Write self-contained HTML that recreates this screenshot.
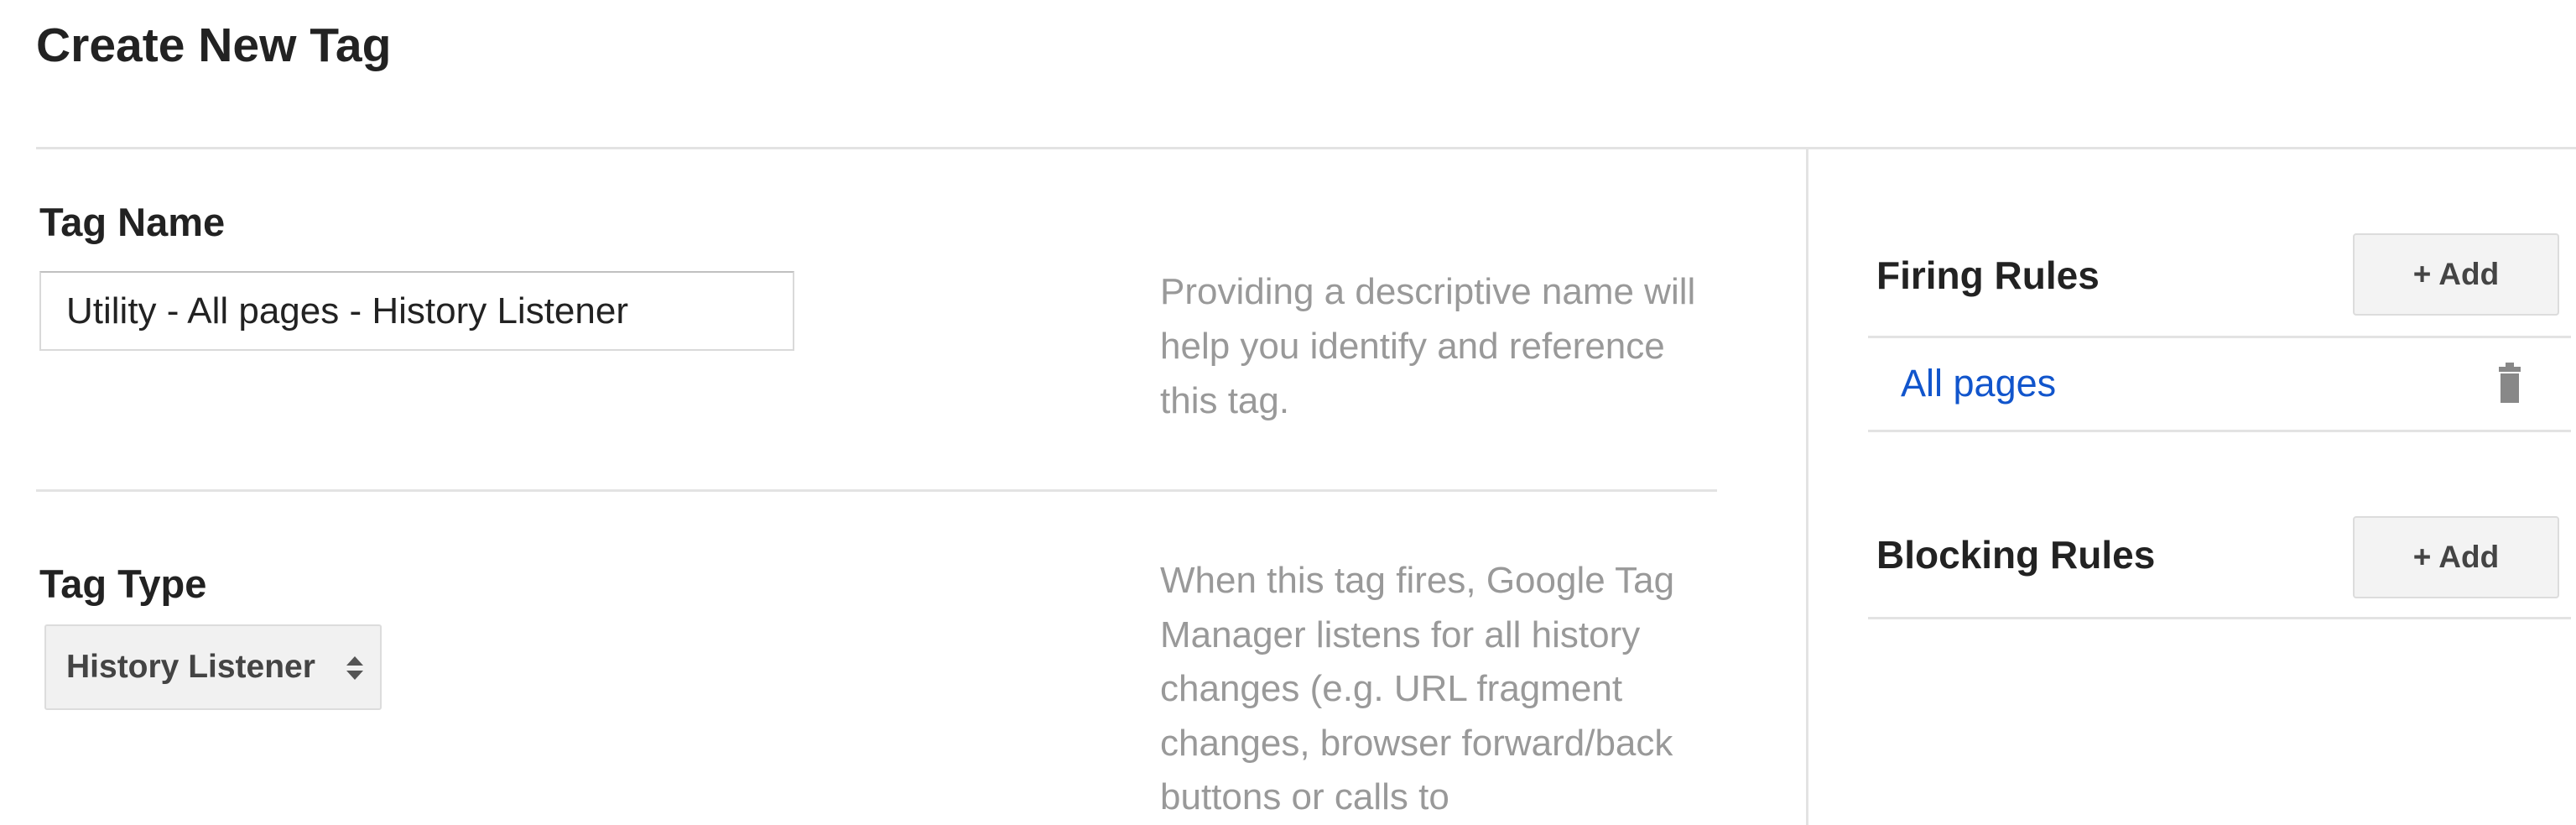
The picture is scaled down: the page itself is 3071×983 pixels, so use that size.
<!DOCTYPE html>
<html><head><meta charset="utf-8"><style>
*{margin:0;padding:0;box-sizing:border-box}
html,body{width:3071px;height:983px;overflow:hidden}
body{background:#fff;font-family:"Liberation Sans",Arial,sans-serif;position:relative;color:#222}
.a{position:absolute;white-space:nowrap}
.h{font-weight:bold}
.line{position:absolute;background:#e3e3e3}
.help{position:absolute;left:1383px;color:#999;font-size:44px;line-height:65px;white-space:nowrap;overflow:hidden}
.btn{position:absolute;left:2805px;width:246px;height:98px;background:#f3f3f3;border:2px solid #dcdcdc;border-radius:4px;font-weight:bold;font-size:37px;color:#444;text-align:center;line-height:94px}
</style></head><body>
<div class="a h" style="left:43px;top:21px;font-size:57px">Create New Tag</div>
<div class="line" style="left:43px;top:175px;width:3028px;height:3px"></div>
<div class="line" style="left:2153px;top:176px;width:3px;height:807px"></div>
<div class="a h" style="left:47px;top:237px;font-size:47px">Tag Name</div>
<div class="a" style="left:47px;top:323px;width:900px;height:95px;border:2px solid #d9d9d9;border-top-color:#c0c0c0;font-size:44px;line-height:91px;padding-left:30px;color:#222">Utility - All pages - History Listener</div>
<div class="help" style="top:315px">Providing a descriptive name will<br>help you identify and reference<br>this tag.</div>
<div class="line" style="left:43px;top:583px;width:2004px;height:3px"></div>
<div class="a h" style="left:47px;top:668px;font-size:47px">Tag Type</div>
<div class="a" style="left:53px;top:744px;width:402px;height:102px;background:#f1f1f1;border:2px solid #dcdcdc;border-radius:3px;font-weight:bold;font-size:39px;color:#444;line-height:98px;padding-left:24px">History Listener
<svg style="position:absolute;left:356px;top:34px" width="24" height="32" viewBox="0 0 24 32"><path d="M12 2 L22 13 H2Z M12 30 L22 19 H2Z" fill="#555"/></svg></div>
<div class="help" style="top:660px;height:323px;line-height:64.5px">When this tag fires, Google Tag<br>Manager listens for all history<br>changes (e.g. URL fragment<br>changes, browser forward/back<br>buttons or calls to<br>window.history.go(), back() and</div>
<div class="a h" style="left:2237px;top:301px;font-size:46px">Firing Rules</div>
<div class="btn" style="top:278px">+ Add</div>
<div class="line" style="left:2227px;top:400px;width:838px;height:3px"></div>
<div class="a" style="left:2266px;top:431px;font-size:45px;color:#1155cc">All pages</div>
<svg style="position:absolute;left:2978px;top:432px" width="28" height="48" viewBox="0 0 28 48"><rect x="9" y="0" width="10" height="5" fill="#888"/><rect x="1" y="5" width="26" height="6" fill="#888"/><rect x="3" y="13" width="22" height="35" fill="#888"/></svg>
<div class="line" style="left:2227px;top:512px;width:838px;height:3px"></div>
<div class="a h" style="left:2237px;top:634px;font-size:46px">Blocking Rules</div>
<div class="btn" style="top:615px">+ Add</div>
<div class="line" style="left:2227px;top:735px;width:838px;height:3px"></div>
</body></html>
